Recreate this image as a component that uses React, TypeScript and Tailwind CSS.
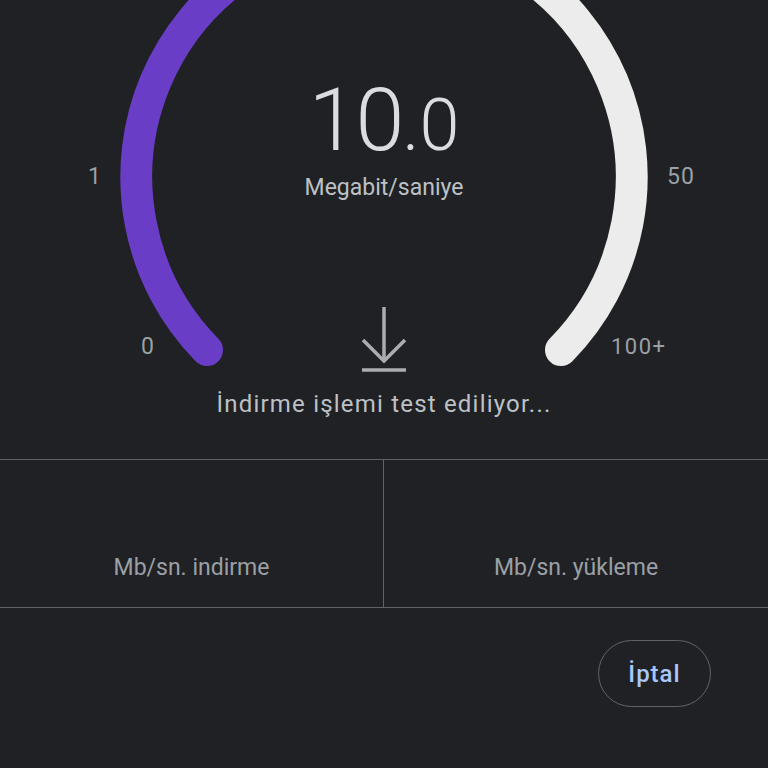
const FONT = "font-['Roboto','Noto_Sans',sans-serif]";

function Gauge() {
  return (
    <svg className="absolute inset-0" width="768" height="459" viewBox="0 0 768 459">
      <path
        d="M 561 350 A 247 247 0 0 0 384 -70"
        fill="none"
        stroke="#ececec"
        strokeWidth="32"
        strokeLinecap="round"
      />
      <path
        d="M 207 350 A 247 247 0 0 1 384 -70"
        fill="none"
        stroke="#6a3dc6"
        strokeWidth="32"
        strokeLinecap="round"
      />
    </svg>
  );
}

function DownloadIcon() {
  return (
    <svg width="48" height="70" viewBox="0 0 48 70" fill="none" stroke="#a9acb0" strokeWidth="3.5">
      <path d="M24 2 V56" />
      <path d="M3 35 L24 56 L45 35" />
      <path d="M2 65 H46" />
    </svg>
  );
}

export default function App() {
  return (
    <div className={`h-[768px] w-[768px] overflow-hidden bg-[#202124] ${FONT}`}>
      <section className="relative h-[459px]">
        <Gauge />
        <span className="absolute left-[88px] top-[162px] text-[23px] leading-[30px] text-[#9aa0a6]">1</span>
        <span className="absolute left-[667px] top-[162px] text-[23px] leading-[30px] tracking-[1px] text-[#9aa0a6]">50</span>
        <span className="absolute left-[141px] top-[332px] text-[23px] leading-[30px] text-[#9aa0a6]">0</span>
        <span className="absolute left-[611px] top-[332px] text-[22px] leading-[30px] tracking-[1.5px] text-[#9aa0a6]">100+</span>

        <div className="relative flex flex-col items-center pt-[76px]">
          <div className="flex h-[88px] items-baseline font-light leading-none text-[#dadce0]">
            <span className="text-[88px] tracking-[-2px]">10</span>
            <span className="text-[72px]">.0</span>
          </div>
          <p className="mt-[12px] text-[23px] leading-none text-[#bdc1c6]">Megabit/saniye</p>
          <div className="mt-[106px] h-[70px]">
            <DownloadIcon />
          </div>
          <p className="mt-[17px] text-[24px] leading-none tracking-[1.2px] text-[#bdc1c6]">
            İndirme işlemi test ediliyor...
          </p>
        </div>
      </section>

      <div className="grid h-[149px] grid-cols-2 border-y border-[#5f6368]">
        <div className="flex items-end justify-center border-r border-[#5f6368] pb-[28px] text-[23px] leading-none text-[#9aa0a6]">
          Mb/sn. indirme
        </div>
        <div className="flex items-end justify-center pb-[28px] text-[23px] leading-none text-[#9aa0a6]">
          Mb/sn. yükleme
        </div>
      </div>

      <div className="flex justify-end pr-[57px] pt-[32px]">
        <button className="flex h-[67px] w-[113px] items-center justify-center rounded-full border border-[#5f6368] text-[24px] font-medium tracking-[1px] text-[#a8c7fa]">
          İptal
        </button>
      </div>
    </div>
  );
}
